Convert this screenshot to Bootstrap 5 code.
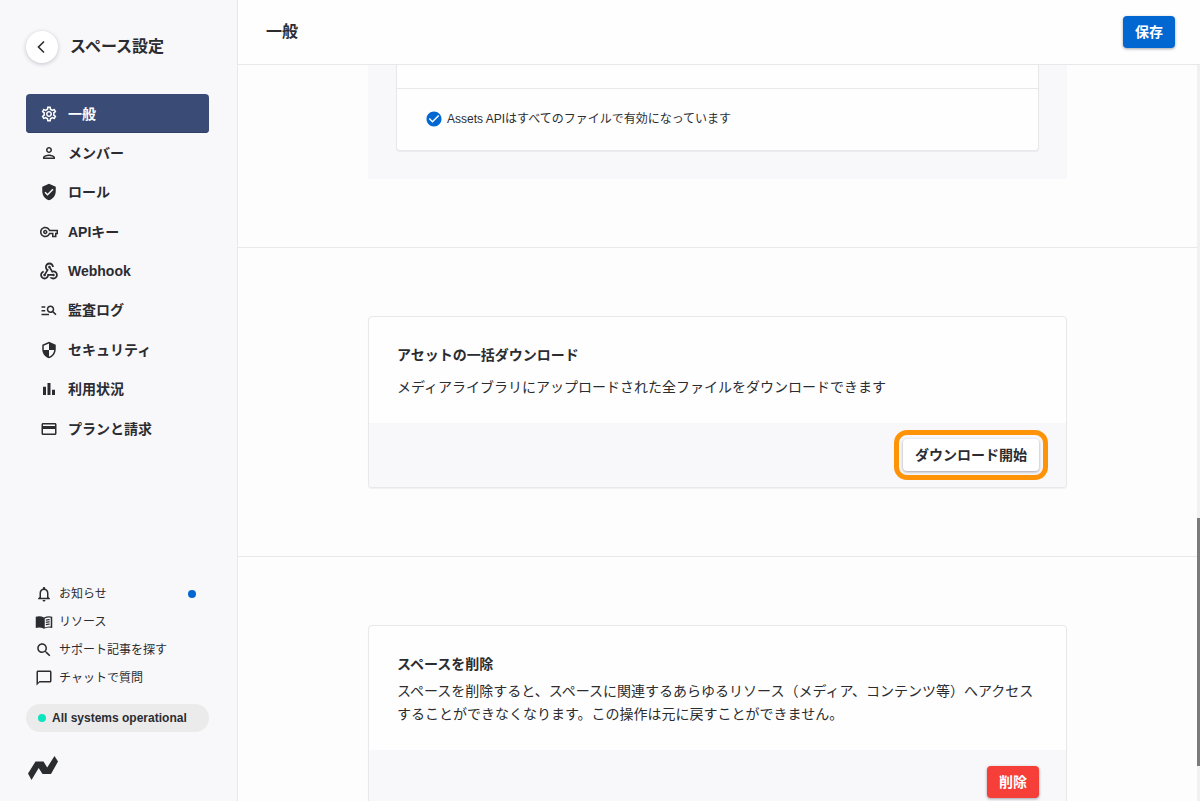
<!DOCTYPE html>
<html lang="ja">
<head>
<meta charset="utf-8">
<meta name="viewport" content="width=device-width, initial-scale=1">
<title>スペース設定 - 一般</title>
<link href="https://cdn.jsdelivr.net/npm/bootstrap@5.3.0/dist/css/bootstrap.min.css" rel="stylesheet">
<style>
  :root { --ink: #2b2c30; --tint: #f8f7fa; --line: #e8e8ea; --blue: #0367d1; }
  body { font-family: "Liberation Sans", "Noto Sans CJK JP", sans-serif; font-size: 14px; line-height: 24px; color: var(--ink); background: #fdfdfe; }
  svg { display: block; flex: none; fill: currentColor; }
  a { color: inherit; text-decoration: none; }
  .side { width: 238px; flex: none; background: var(--tint); border-right: 1px solid var(--line); padding: 31px 28px 20px 26px; }
  .page-name { font-size: 16px; font-weight: 700; }
  .back { width: 32px; height: 32px; background: #fff; box-shadow: 0 1px 4px rgba(40, 40, 60, .25); }
  .menu { height: 354px; margin-top: 31px; }
  .menu a { height: 39px; padding: 0 14px; gap: 10px; font-weight: 700; border-radius: 4px; }
  .menu a.active { background: #3a4c76; color: #fff; box-shadow: inset 0 -1px 0 #2f3f68; }
  .help a { height: 28px; gap: 6px; padding: 0 9px; font-size: 12px; }
  .dot { width: 8px; height: 8px; border-radius: 50%; background: var(--blue); }
  .status { height: 28px; padding: 0 12px; gap: 6px; margin: 12px 0 24px; background: #ecebec; font-size: 12px; font-weight: 700; }
  .status .dot { background: #0be5bd; }
  .logo { margin-left: 2px; }
  .topbar { height: 65px; flex: none; padding: 0 25px 0 28px; border-bottom: 1px solid var(--line); background: #fefefe; }
  .act { height: 32px; padding: 0 12px; border: 0; border-radius: 4px; font-size: 14px; font-weight: 700; line-height: 32px; color: #fff; box-shadow: 0 1px 3px rgba(30, 30, 50, .4); }
  .act-save { background: var(--blue); }
  .act-delete { background: #f63f38; }
  .act-plain { background: #fff; color: var(--ink); }
  .guide { outline: 5px solid #ff9307; outline-offset: 4px; }
  .block { padding: 68px 24px; border-bottom: 1px solid var(--line); }
  .block.first { padding-top: 0; }
  .sheet { max-width: 699px; }
  .framed { border: 1px solid var(--line); border-radius: 4px; background: #fefefe; overflow: hidden; box-shadow: 0 1px 1px rgba(40, 40, 60, .06); }
  .framed-text { padding: 26px 28px 24px; }
  .framed-text h2 { font-size: 14px; font-weight: 700; line-height: 24px; margin: 0 0 4px; }
  .framed-text h2.roomy { margin-bottom: 9px; }
  .framed-text p { line-height: 23px; margin: 0; }
  .framed-foot { background: var(--tint); padding: 16px 27px; }
  .usage { background: var(--tint); padding: 0 28px 28px; }
  .usage .framed { border-top: 0; border-radius: 0 0 4px 4px; }
  .usage-row { height: 24px; border-bottom: 1px solid var(--line); }
  .usage-note { padding: 18px 28px 19px; gap: 4px; font-size: 12px; }
  .rail { width: 3px; flex: none; background: #f1f1f2; padding-top: 56.6vh; }
  .rail span { height: 248px; background: #7b7b7d; }
</style>
</head>
<body>
<div class="d-flex vh-100 overflow-hidden">
  <aside class="side d-flex flex-column">
    <div class="d-flex align-items-center gap-2">
      <a href="#" class="back rounded-circle d-flex align-items-center justify-content-center me-1" aria-label="戻る">
        <svg width="14" height="14" viewBox="0 0 14 14"><path d="M9 1.500 3.500 7 9 12.500" fill="none" stroke="currentColor" stroke-width="1.600"/></svg>
      </a>
      <span class="page-name">スペース設定</span>
    </div>
    <nav class="menu d-flex flex-column justify-content-between">
      <a href="#" class="active d-flex align-items-center" aria-current="page"><svg width="18" height="18" viewBox="0 0 24 24"><path d="M19.43 12.98c.04-.32.07-.64.07-.98 0-.34-.03-.66-.07-.98l2.11-1.65c.19-.15.24-.42.12-.64l-2-3.46c-.09-.16-.26-.25-.44-.25-.06 0-.12.01-.17.03l-2.49 1c-.52-.4-1.08-.73-1.69-.98l-.38-2.65C14.46 2.18 14.25 2 14 2h-4c-.25 0-.46.18-.49.42l-.38 2.65c-.61.25-1.17.59-1.69.98l-2.49-1c-.06-.02-.12-.03-.18-.03-.17 0-.34.09-.43.25l-2 3.46c-.13.22-.07.49.12.64l2.11 1.65c-.04.32-.07.65-.07.98 0 .33.03.66.07.98l-2.11 1.65c-.19.15-.24.42-.12.64l2 3.46c.09.16.26.25.44.25.06 0 .12-.01.17-.03l2.49-1c.52.4 1.08.73 1.69.98l.38 2.65c.03.24.24.42.49.42h4c.25 0 .46-.18.49-.42l.38-2.65c.61-.25 1.17-.59 1.69-.98l2.49 1c.06.02.12.03.18.03.17 0 .34-.09.43-.25l2-3.46c.12-.22.07-.49-.12-.64l-2.11-1.65zm-1.98-1.71c.04.31.05.52.05.73 0 .21-.02.43-.05.73l-.14 1.13.89.7 1.08.84-.7 1.21-1.27-.51-1.04-.42-.9.68c-.43.32-.84.56-1.25.73l-1.06.43-.16 1.13-.2 1.35h-1.4l-.19-1.35-.16-1.13-1.06-.43c-.43-.18-.83-.41-1.23-.71l-.91-.7-1.06.43-1.27.51-.7-1.21 1.08-.84.89-.7-.14-1.13c-.03-.31-.05-.54-.05-.74s.02-.43.05-.73l.14-1.13-.89-.7-1.08-.84.7-1.21 1.27.51 1.04.42.9-.68c.43-.32.84-.56 1.25-.73l1.06-.43.16-1.13.2-1.35h1.39l.19 1.35.16 1.13 1.06.43c.43.18.83.41 1.23.71l.91.7 1.06-.43 1.27-.51.7 1.21-1.07.85-.89.7.14 1.13zM12 8c-2.21 0-4 1.79-4 4s1.79 4 4 4 4-1.79 4-4-1.79-4-4-4zm0 6c-1.1 0-2-.9-2-2s.9-2 2-2 2 .9 2 2-.9 2-2 2z"/></svg>一般</a>
      <a href="#" class="d-flex align-items-center"><svg width="18" height="18" viewBox="0 0 24 24"><path d="M12 6c1.100 0 2 .9 2 2s-.9 2-2 2-2-.9-2-2 .9-2 2-2m0 10c2.700 0 5.800 1.290 6 2H6c.23-.72 3.310-2 6-2m0-12C9.790 4 8 5.790 8 8s1.790 4 4 4 4-1.790 4-4-1.790-4-4-4zm0 10c-2.670 0-8 1.340-8 4v2h16v-2c0-2.660-5.330-4-8-4z"/></svg>メンバー</a>
      <a href="#" class="d-flex align-items-center"><svg width="18" height="18" viewBox="0 0 24 24"><path d="M12 1 3 5v6c0 5.550 3.840 10.740 9 12 5.160-1.260 9-6.450 9-12V5l-9-4zm-2 16-4-4 1.410-1.410L10 14.170l6.590-6.590L18 9l-8 8z"/></svg>ロール</a>
      <a href="#" class="d-flex align-items-center"><svg width="18" height="18" viewBox="0 0 24 24"><path d="M22 19h-6v-4h-2.680c-1.140 2.420-3.600 4-6.320 4-3.860 0-7-3.140-7-7s3.140-7 7-7c2.720 0 5.170 1.580 6.320 4H24v6h-2v4zm-4-2h2v-4h2v-2H11.940l-.23-.67C11.010 8.340 9.110 7 7 7c-2.760 0-5 2.240-5 5s2.240 5 5 5c2.110 0 4.010-1.340 4.710-3.330l.23-.67H18v4zM7 15c-1.650 0-3-1.350-3-3s1.350-3 3-3 3 1.350 3 3-1.350 3-3 3zm0-4c-.55 0-1 .45-1 1s.45 1 1 1 1-.45 1-1-.45-1-1-1z"/></svg>APIキー</a>
      <a href="#" class="d-flex align-items-center"><svg width="18" height="18" viewBox="1.800 1.300 20.400 20.400"><path d="M10 15h5.880c.27-.31.67-.5 1.120-.5.83 0 1.500.67 1.500 1.500s-.67 1.500-1.500 1.500c-.44 0-.84-.19-1.120-.5H11.900c-.46 2.280-2.480 4-4.900 4-2.760 0-5-2.240-5-5 0-2.420 1.720-4.440 4-4.900v2.070C4.840 13.580 4 14.700 4 16c0 1.650 1.350 3 3 3s3-1.350 3-3v-1zm2.500-11c1.650 0 3 1.350 3 3h2c0-2.760-2.240-5-5-5s-5 2.240-5 5c0 1.430.6 2.710 1.550 3.620l-2.350 3.900c-.68.14-1.200.75-1.200 1.480 0 .83.67 1.500 1.500 1.500s1.500-.67 1.500-1.500c0-.16-.02-.31-.07-.45l3.380-5.630C10.490 9.610 9.500 8.420 9.500 7c0-1.650 1.350-3 3-3zm4.500 9c-.64 0-1.230.2-1.720.54l-3.050-5.070C11.530 8.350 11 7.740 11 7c0-.83.67-1.500 1.500-1.500S14 6.170 14 7c0 .15-.02.29-.06.43l2.190 3.650c.28-.05.57-.08.87-.08 2.760 0 5 2.240 5 5s-2.240 5-5 5c-1.850 0-3.470-1.010-4.330-2.500h2.670c.48.32 1.050.5 1.660.5 1.650 0 3-1.350 3-3s-1.350-3-3-3z"/></svg>Webhook</a>
      <a href="#" class="d-flex align-items-center"><svg width="18" height="18" viewBox="0 0 24 24"><path d="M7 9H2V7h5v2zm0 3H2v2h5v-2zm13.590 7-3.830-3.830c-.8.520-1.740.83-2.760.83-2.760 0-5-2.240-5-5s2.240-5 5-5 5 2.240 5 5c0 1.020-.31 1.960-.83 2.750L22 17.590 20.590 19zM17 11c0-1.650-1.350-3-3-3s-3 1.350-3 3 1.350 3 3 3 3-1.350 3-3zM2 19h10v-2H2v2z"/></svg>監査ログ</a>
      <a href="#" class="d-flex align-items-center"><svg width="18" height="18" viewBox="0 0 24 24"><path d="M12 1 3 5v6c0 5.550 3.840 10.740 9 12 5.160-1.260 9-6.450 9-12V5l-9-4zm0 10.990h7c-.53 4.120-3.280 7.790-7 8.940V12H5V6.300l7-3.110v8.800z"/></svg>セキュリティ</a>
      <a href="#" class="d-flex align-items-center"><svg width="18" height="18" viewBox="0 0 24 24"><path d="M4 9h4v11H4zM10 4h4v16h-4zM16 13h4v7h-4z"/></svg>利用状況</a>
      <a href="#" class="d-flex align-items-center"><svg width="18" height="18" viewBox="0 0 24 24"><path d="M20 4H4c-1.110 0-1.990.89-1.990 2L2 18c0 1.110.89 2 2 2h16c1.110 0 2-.89 2-2V6c0-1.110-.89-2-2-2zm0 14H4v-6h16v6zm0-10H4V6h16v2z"/></svg>プランと請求</a>
    </nav>
    <div class="mt-auto">
      <nav class="help">
        <a href="#" class="d-flex align-items-center"><svg width="18" height="18" viewBox="0 0 24 24"><path d="M12 22c1.100 0 2-.9 2-2h-4c0 1.100.9 2 2 2zm6-6v-5c0-3.070-1.630-5.640-4.500-6.320V4c0-.83-.67-1.500-1.500-1.500s-1.500.67-1.500 1.500v.68C7.640 5.360 6 7.920 6 11v5l-2 2v1h16v-1l-2-2zm-2 1H8v-6c0-2.480 1.510-4.500 4-4.500s4 2.020 4 4.500v6z"/></svg>お知らせ<span class="dot ms-auto me-1"></span></a>
        <a href="#" class="d-flex align-items-center"><svg width="18" height="18" viewBox="0 0 24 24"><path d="M1 5q5.500-2 11 1 5.500-3 11-1v15q-5.500-1.500-11 1-5.500-2.500-11-1zm12 2.200v12q4-1.600 8-1.200V6.200q-4-.8-8 1z"/><path d="M14.500 8.700q2.500-.9 5-.6v1.500q-2.500-.3-5 .6zm0 3q2.500-.9 5-.6v1.500q-2.500-.3-5 .6zm0 3q2.500-.9 5-.6v1.500q-2.500-.3-5 .6z"/></svg>リソース</a>
        <a href="#" class="d-flex align-items-center"><svg width="18" height="18" viewBox="0 0 24 24"><path d="M15.500 14h-.79l-.28-.27C15.410 12.590 16 11.110 16 9.500 16 5.910 13.090 3 9.500 3S3 5.910 3 9.500 5.910 16 9.500 16c1.610 0 3.090-.59 4.230-1.570l.27.28v.79l5 4.990L20.490 19l-4.990-5zm-6 0C7.010 14 5 11.990 5 9.500S7.010 5 9.500 5 14 7.010 14 9.500 11.990 14 9.500 14z"/></svg>サポート記事を探す</a>
        <a href="#" class="d-flex align-items-center"><svg width="18" height="18" viewBox="0 0 24 24"><path d="M20 2H4c-1.100 0-2 .9-2 2v18l4-4h14c1.100 0 2-.9 2-2V4c0-1.100-.9-2-2-2zm0 14H6l-2 2V4h16v12z"/></svg>チャットで質問</a>
      </nav>
      <a href="#" class="status rounded-pill d-flex align-items-center"><span class="dot"></span>All systems operational</a>
      <svg class="logo" width="30" height="25" viewBox="0 0 30 25" role="img" aria-label="ロゴ"><path d="M0 17.500 7.500 5.500h8l3.700 6L26.500 0 30 5.500 23 18h-8.500l-3.800-6L3.500 24z"/></svg>
    </div>
  </aside>
  <div class="flex-grow-1 d-flex flex-column overflow-hidden">
    <header class="topbar d-flex align-items-center justify-content-between">
      <h1 class="page-name m-0">一般</h1>
      <button type="button" class="act act-save">保存</button>
    </header>
    <div class="flex-grow-1 d-flex overflow-hidden">
      <main class="flex-grow-1">
        <section class="block first">
          <div class="sheet usage mx-auto">
            <div class="framed">
              <div class="usage-row"></div>
              <div class="usage-note d-flex align-items-center">
                <svg width="18" height="18" viewBox="0 0 24 24" color="#0367d1"><path d="M12 2C6.480 2 2 6.480 2 12s4.480 10 10 10 10-4.480 10-10S17.520 2 12 2zm-2 15-5-5 1.410-1.410L10 14.170l7.590-7.590L19 8l-9 9z"/></svg>
                <span>Assets APIはすべてのファイルで有効になっています</span>
              </div>
            </div>
          </div>
        </section>
        <section class="block">
          <div class="sheet framed mx-auto">
            <div class="framed-text">
              <h2 class="roomy">アセットの一括ダウンロード</h2>
              <p>メディアライブラリにアップロードされた全ファイルをダウンロードできます</p>
            </div>
            <div class="framed-foot text-end"><button type="button" class="act act-plain guide">ダウンロード開始</button></div>
          </div>
        </section>
        <section class="block">
          <div class="sheet framed mx-auto">
            <div class="framed-text">
              <h2>スペースを削除</h2>
              <p>スペースを削除すると、スペースに関連するあらゆるリソース（メディア、コンテンツ等）へアクセスすることができなくなります。この操作は元に戻すことができません。</p>
            </div>
            <div class="framed-foot text-end"><button type="button" class="act act-delete">削除</button></div>
          </div>
        </section>
      </main>
      <div class="rail"><span class="d-block"></span></div>
    </div>
  </div>
</div>
<script src="https://cdn.jsdelivr.net/npm/bootstrap@5.3.0/dist/js/bootstrap.bundle.min.js"></script>
</body>
</html>
